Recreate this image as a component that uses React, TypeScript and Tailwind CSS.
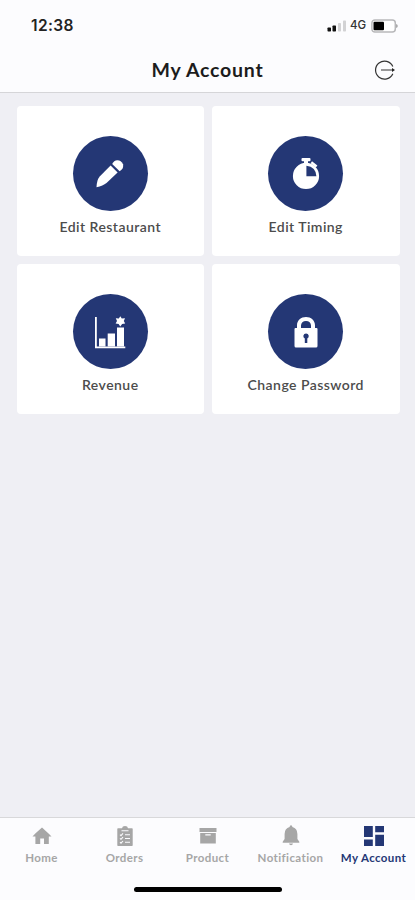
import type { ReactNode } from "react";
import clsx from "clsx";

function PencilIcon() {
  return (
    <svg viewBox="0 0 30 30" className="size-[30px]" fill="currentColor">
      <path d="M15.6 6.4 22.6 13.6 11.5 24.1Q8 27 1.5 28.3 1.7 21 4.7 17.4Z" />
      <path d="M17.2 5.1Q19 1.2 22.4 1.3 26.2 1.5 28 5.2 29.2 9.5 24.6 12.3Z" />
    </svg>
  );
}

function StopwatchIcon() {
  return (
    <svg viewBox="0 0 30 34" className="h-[34px] w-[30px]" fill="currentColor">
      <rect x="10.5" y="1" width="9" height="3.2" rx="1" />
      <rect x="13" y="3.5" width="4" height="4" />
      <path d="m21 4.2 5.4 4.4-1.5 1.9-5.300-4.300Z" />
      <path
        fillRule="evenodd"
        d="M15 5.8a13.1 13.1 0 1 1 0 26.2 13.1 13.1 0 0 1 0-26.2ZM15.4 8.8V19.3H25.4Q25 10 15.4 8.8Z"
      />
    </svg>
  );
}

function RevenueIcon() {
  return (
    <svg viewBox="0 0 32 34" className="h-[34px] w-8" fill="currentColor">
      <path d="M1 2h1.800v29.400h28.500v1.800H1Z" />
      <rect x="5" y="23.5" width="6.500" height="8" />
      <rect x="13.7" y="18.5" width="7.300" height="13" />
      <rect x="23" y="12.5" width="7" height="19" />
      <path d="m26.3 1.2 1.5 2.2 3.200-.2-1.200 2.900 1.4 2.500-3.100.5-1.800 2.500-1.7-2.5-3-.5 1.4-2.500L21.800 3.200l3 .2Z" />
    </svg>
  );
}

function LockIcon() {
  return (
    <svg viewBox="0 0 24 32" className="h-8 w-6" fill="currentColor">
      <path d="M3 13V9.3C3 4.4 7 1 12 1s9 3.4 9 8.3V13h-4V9.5C17 6.8 15 5 12 5S7 6.8 7 9.5V13Z" />
      <path
        fillRule="evenodd"
        d="M1.5 12h21q1 0 1 1v17q0 1.5-1.5 1.5H2Q.5 31.5.5 30V13q0-1 1-1ZM12 17.5a2.7 2.7 0 0 0-1.2 5.1V27h2.5v-4.4A2.7 2.7 0 0 0 12 17.5Z"
      />
    </svg>
  );
}

function HomeIcon() {
  return (
    <svg viewBox="0 0 20 20" className="size-5" fill="currentColor">
      <path d="M10 1.5 16.8 7.7 19.5 10.5H16.8V18H12v-5.6H8.2V18H3.4v-7.5H.5l2.8-2.9Z" />
    </svg>
  );
}

function OrdersIcon() {
  return (
    <svg viewBox="0 0 16 20" className="h-5 w-4" fill="currentColor">
      <path d="M1 2.2h4Q5.3 0 8 0t3 2.2h4q.7 0 .7.7v16.3q0 .7-.7.7H1q-.7 0-.7-.7V2.9q0-.7.7-.7Z" />
      <path
        d="M4.5 4.8h7M3 8.6l1 1 2-2.2M3 12.3l1 1 2-2.2M3 16.2l1 1 2-2.2M8 8.7h5M8 12.5h5M8 16.3h5"
        fill="none"
        stroke="#fcfcfe"
        strokeWidth="1.1"
      />
    </svg>
  );
}

function ProductIcon() {
  return (
    <svg viewBox="0 0 18 20" className="h-5 w-[18px]" fill="currentColor">
      <rect x="0.5" y="2" width="17" height="4" />
      <path fillRule="evenodd" d="M1.2 7h15.6v10.5H1.2ZM6.3 8.3v1.3h5.4V8.3Z" />
    </svg>
  );
}

function BellIcon() {
  return (
    <svg viewBox="0 0 18 21" className="h-[21px] w-[18px]" fill="currentColor">
      <path d="M9 .3q1.3 0 1.4 1.7 5 1.4 5 7v5l1.9 2.8v1H.7v-1L2.6 14V9q0-5.6 5-7Q7.7.3 9 .3Z" />
      <path d="M7 18.600h4q-.4 1.700-2 1.700t-2-1.700Z" />
    </svg>
  );
}

function DashboardIcon() {
  return (
    <svg viewBox="0 0 20 20" className="size-5" fill="currentColor">
      <path d="M0 0h8.8v11H0ZM11.2 0H20v6.3h-8.8ZM0 13.4h8.8V20H0ZM11.2 8.8H20V20h-8.8Z" />
    </svg>
  );
}

function StatusBar() {
  return (
    <div className="flex h-[50px] items-center justify-between pt-0.5 pr-[17px] pl-[31px]">
      <span className="font-['Inter'] text-[15.5px] font-semibold tracking-[0.35px] text-[#222]">12:38</span>
      <div className="flex items-center">
        <svg viewBox="0 0 20 12" className="h-3 w-5">
          <rect x="0.5" y="7.5" width="3.5" height="4" rx="0.7" fill="#111" />
          <rect x="5.5" y="5.5" width="3.5" height="6" rx="0.7" fill="#111" />
          <rect x="11" y="3" width="3" height="8.5" rx="0.7" fill="#d2d2d4" />
          <rect x="16" y="0.5" width="3" height="11" rx="0.7" fill="#d2d2d4" />
        </svg>
        <span className="ml-[3px] w-[19px] font-['Inter'] text-[11.5px] font-medium text-[#333]">4G</span>
        <svg viewBox="0 0 27 14" className="ml-[2px] h-3.5 w-[27px]">
          <rect x="0.9" y="0.9" width="23.4" height="12.2" rx="3" fill="white" stroke="#b8b8ba" strokeWidth="1.5" />
          <rect x="2.5" y="2.7" width="10.5" height="8.6" rx="1" fill="#000" />
          <path d="M25.2 5v4q1.5-.5 1.5-2t-1.5-2Z" fill="#999" />
        </svg>
      </div>
    </div>
  );
}

function Header() {
  return (
    <header className="h-[93px] shrink-0 border-b border-[#d5d5d8] bg-[#fcfcfe]">
      <StatusBar />
      <div className="grid h-10 grid-cols-[1fr_auto_1fr] items-center">
        <h1 className="col-start-2 text-[19.5px] font-bold tracking-[0.8px] text-[#1c1c1c]">My Account</h1>
        <button aria-label="Log out" className="mr-[19px] justify-self-end">
          <svg viewBox="0 0 22 20" className="block h-5 w-[22px]" fill="none" stroke="#333" strokeWidth="1.2">
            <path d="M18.8 6.5A9 9 0 1 0 18.8 13.7M7 10h12" />
            <path d="m18 8 3 2-3 2Z" fill="#222" stroke="none" />
          </svg>
        </button>
      </div>
    </header>
  );
}

type MenuCardProps = {
  icon: ReactNode;
  label: string;
};

function MenuCard({ icon, label }: MenuCardProps) {
  return (
    <button className="flex h-[150px] flex-col items-center rounded-[4px] bg-white pt-[30px]">
      <span className="flex size-[75px] items-center justify-center rounded-full bg-[#243775] text-white">{icon}</span>
      <span className="mt-1.5 text-[14px] leading-5 font-semibold tracking-[0.45px] whitespace-nowrap text-[#4c4c4c]">
        {label}
      </span>
    </button>
  );
}

const cards: MenuCardProps[] = [
  { icon: <PencilIcon />, label: "Edit Restaurant" },
  { icon: <StopwatchIcon />, label: "Edit Timing" },
  { icon: <RevenueIcon />, label: "Revenue" },
  { icon: <LockIcon />, label: "Change Password" },
];

const tabs = [
  { icon: <HomeIcon />, label: "Home" },
  { icon: <OrdersIcon />, label: "Orders" },
  { icon: <ProductIcon />, label: "Product" },
  { icon: <BellIcon />, label: "Notification" },
  { icon: <DashboardIcon />, label: "My Account", active: true },
];

function TabBar() {
  return (
    <nav className="flex h-[83px] shrink-0 flex-col items-center border-t border-[#d8d8da] bg-[#fcfcfe]">
      <div className="grid w-full grid-cols-5">
        {tabs.map((tab) => (
          <button
            key={tab.label}
            className={clsx("flex flex-col items-center pt-[7px]", tab.active ? "text-[#243775]" : "text-[#a6a6a6]")}
          >
            <span className="flex h-[21px] items-center">{tab.icon}</span>
            <span className="mt-1 text-[11.5px] leading-4 font-bold tracking-[0.4px] whitespace-nowrap">
              {tab.label}
            </span>
          </button>
        ))}
      </div>
      <div className="mt-[21px] h-[5px] w-[148px] rounded-full bg-black" />
    </nav>
  );
}

export default function App() {
  return (
    <div className="flex h-[900px] w-[415px] flex-col overflow-hidden bg-[#efeff4] font-['Lato',sans-serif]">
      <Header />
      <main className="flex-1 pt-[13px] pr-[15.5px] pl-[16.5px]">
        <div className="grid grid-cols-2 gap-2">
          {cards.map((card) => (
            <MenuCard key={card.label} {...card} />
          ))}
        </div>
      </main>
      <TabBar />
    </div>
  );
}
